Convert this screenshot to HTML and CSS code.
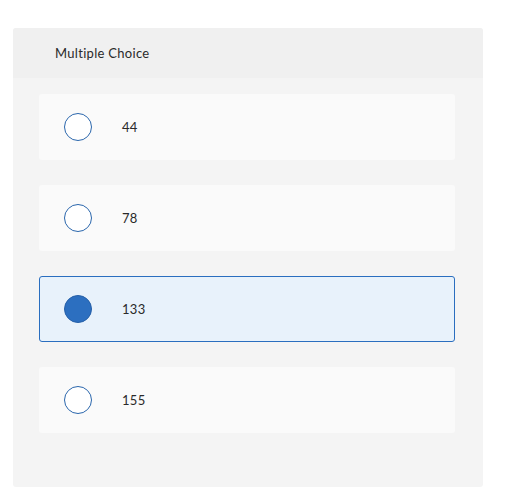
FILE: index.html
```html
<!DOCTYPE html>
<html>
<head>
<meta charset="utf-8">
<link rel="stylesheet" href="styles.css">
</head>
<body>
<div class="card">
  <div class="card-header">Multiple Choice</div>
  <div class="card-body">
    <div class="option"><span class="radio"></span><span class="label">44</span></div>
    <div class="option"><span class="radio"></span><span class="label">78</span></div>
    <div class="option selected"><span class="radio"></span><span class="label">133</span></div>
    <div class="option"><span class="radio"></span><span class="label">155</span></div>
  </div>
</div>
</body>
</html>
```
FILE: styles.css
```css
html, body {
  margin: 0;
  padding: 0;
  background: #ffffff;
}
body {
  font-family: "Lato", "Open Sans", "Liberation Sans", sans-serif;
  color: #2a2a2a;
  padding: 28px 0 0 13px;
}
.card {
  width: 470px;
  height: 459px;
  background: #f4f4f4;
  border-radius: 3px;
  display: flex;
  flex-direction: column;
}
.card-header {
  height: 50px;
  background: #f0f0f0;
  border-radius: 3px 3px 0 0;
  display: flex;
  align-items: center;
  padding-left: 42px;
  font-size: 13px;
  letter-spacing: 0.3px;
}
.card-body {
  padding: 16px 28px 0 26px;
  display: flex;
  flex-direction: column;
  gap: 25px;
}
.option {
  height: 66px;
  box-sizing: border-box;
  background: #fafafa;
  border-radius: 3px;
  display: flex;
  align-items: center;
  padding-left: 25px;
}
.option.selected {
  background: #e8f2fb;
  border: 1px solid #2a6ebf;
  padding-left: 24px;
}
.radio {
  width: 28px;
  height: 28px;
  box-sizing: border-box;
  border-radius: 50%;
  border: 1px solid #2a66ac;
  background: #ffffff;
  flex: none;
}
.option.selected .radio {
  background: #2c6fc0;
  border-color: #2660a8;
}
.label {
  margin-left: 30px;
  font-size: 13px;
  letter-spacing: 0.3px;
}
```
